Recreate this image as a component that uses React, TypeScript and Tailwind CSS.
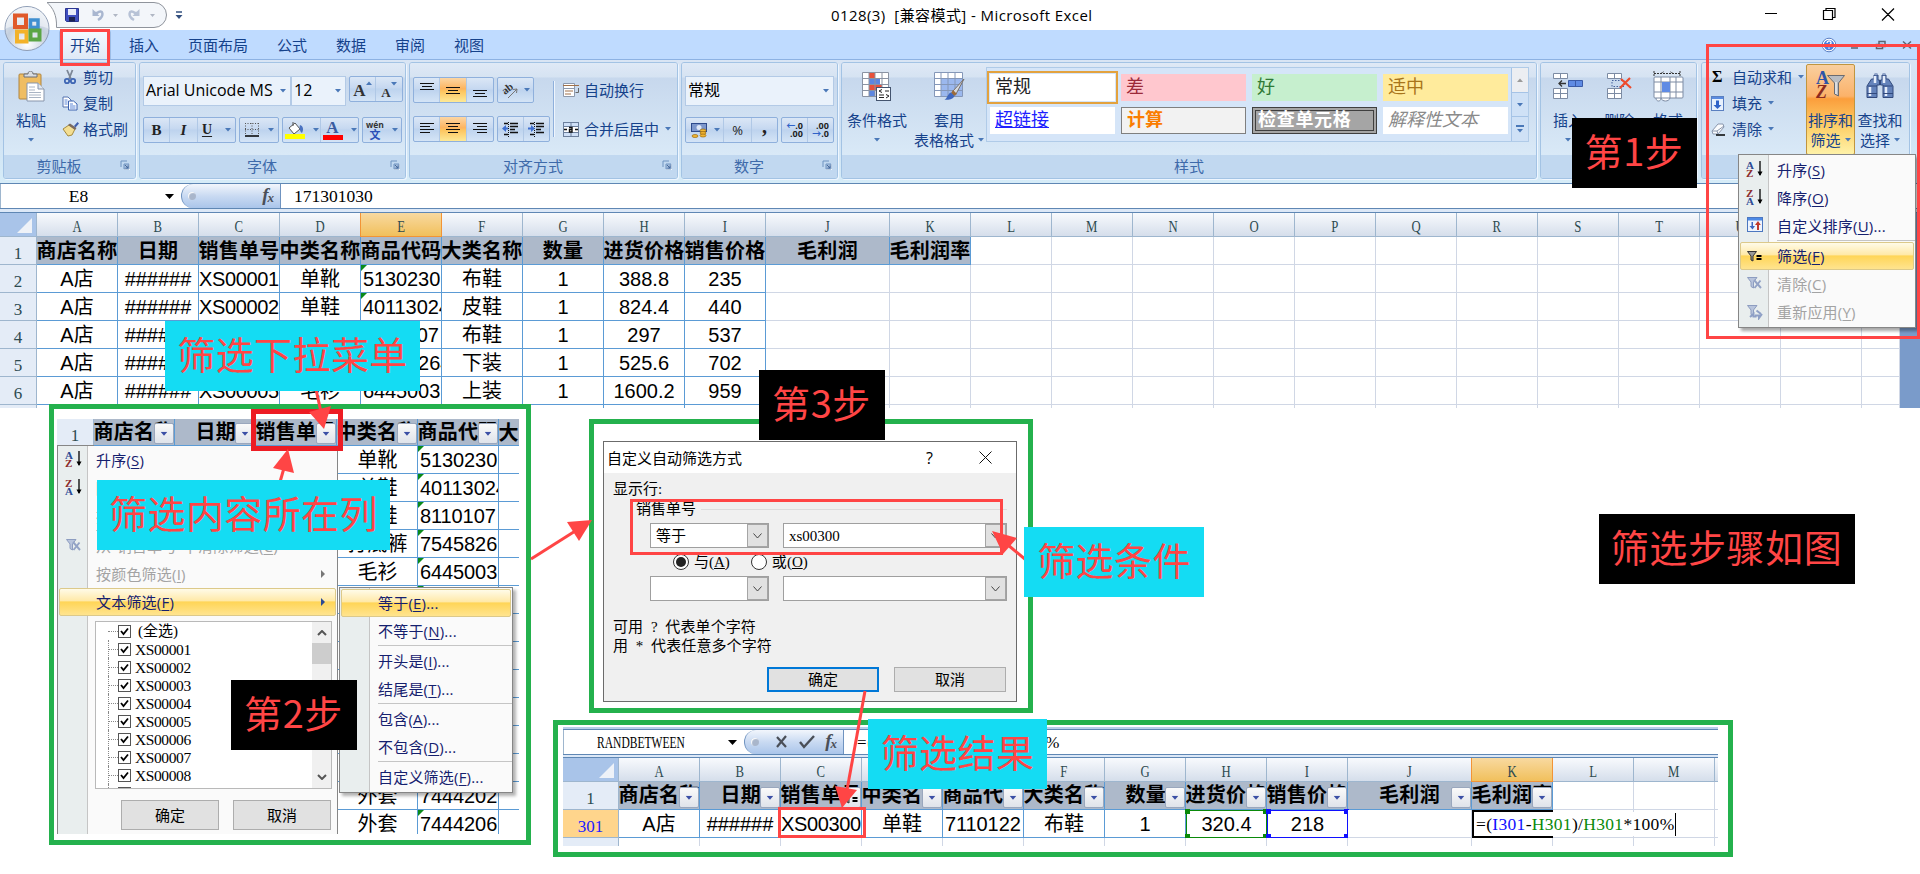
import React from "react";

const UI = "[font-family:'Open_Sans','Noto_Sans_CJK_SC',sans-serif]";
const SONG = "[font-family:'Liberation_Serif','Noto_Sans_CJK_SC',serif]";
const DATA = "[font-family:'Liberation_Sans','Noto_Sans_CJK_SC',sans-serif]";

/* ---------- small drawings ---------- */

function Caret({ c = "fill-[#4a78b8]" }: { c?: string }) {
  return (
    <svg width="6" height="4" viewBox="0 0 6 4" className={`shrink-0 ${c}`}>
      <path d="M0 0h6L3 3.6z" />
    </svg>
  );
}

function Launcher() {
  return (
    <svg width="10" height="10" viewBox="0 0 10 10" fill="none">
      <path d="M1 7V1h6" stroke="#6f93c0" />
      <path d="M4 9.5h5.5V4" stroke="#fff" />
      <path d="M4 4h5v5H4z" fill="#a9c0de" stroke="#6f93c0" />
      <path d="M5 5l3 3M8 5.5V8H5.5" stroke="#44699c" />
    </svg>
  );
}

function AlignIcon({ kind }: { kind: string }) {
  const rows: Record<string, number[][]> = {
    top: [[0, 0, 14], [2, 3, 10], [0, 6, 14]],
    mid: [[0, 4, 14], [2, 7, 10], [0, 10, 14]],
    bot: [[0, 7, 14], [2, 10, 10], [0, 13, 14]],
    left: [[0, 1, 14], [0, 4, 10], [0, 7, 14], [0, 10, 10]],
    center: [[0, 1, 14], [2, 4, 10], [0, 7, 14], [2, 10, 10]],
    right: [[0, 1, 14], [4, 4, 10], [0, 7, 14], [4, 10, 10]],
  };
  return (
    <svg width="14" height="15" viewBox="0 0 14 15" shapeRendering="crispEdges">
      {rows[kind].map(([x, y, w]) => (
        <rect key={y} x={x} y={y} width={w} height="1.4" fill="#111" />
      ))}
    </svg>
  );
}

function IndentIcon({ right }: { right?: boolean }) {
  return (
    <svg width="17" height="15" viewBox="0 0 17 15">
      <path d="M2 1.500h4M8 1.500h8M8 4.500h8M8 7.500h5M8 10.500h8M2 12.500h4" stroke="#111" strokeWidth="1.500" />
      <path d="M6.500 0v15" stroke="#111" strokeDasharray="1 1" />
      {right ? <path d="M0 5.500h3V3l4 3.500L3 10V7.500H0z" fill="#3f6fd0" /> : <path d="M6 5.500H4V3L0 6.500 4 10V7.500h2z" fill="#3f6fd0" />}
    </svg>
  );
}

function Funnel({ mark, dim }: { mark: "eq" | "x" | "re"; dim?: boolean }) {
  return (
    <svg width="16" height="16" viewBox="0 0 16 16" fill="none">
      <path d={mark === "eq" ? "M0.500 3.500h9L6 8v5l-2-1V8z" : "M0.500 1.500h9.500L6.500 6v6l-2.500-1.500V6z"} fill={dim ? "#b8c4dc" : "#9a9a9a"} stroke={dim ? "#8d9dc0" : "#333"} />
      {mark === "eq" && <path d="M9.500 8h5M9.500 11h5" stroke="#000" strokeWidth="1.800" />}
      {mark === "x" && <path d="M7 4l7 8M13.500 4.500L7.500 12" stroke="#93a3c6" strokeWidth="1.900" />}
      {mark === "re" && <path d="M3 13l3.500-3v2.500h3M15 10l-3 4v-2.500H8M9.500 6.500l4.500 3.500" stroke="#8fa0c6" strokeWidth="2" />}
    </svg>
  );
}

function SortIcon({ desc }: { desc?: boolean }) {
  return (
    <span className={`flex items-center gap-[3px] pb-[3px] ${SONG}`}>
      <span className="flex flex-col text-[11px] leading-[8px] font-bold">
        <span className={desc ? "text-[#8b2a2a]" : "text-[#2b4a94]"}>{desc ? "Z" : "A"}</span>
        <span className={desc ? "text-[#2b4a94]" : "text-[#8b2a2a]"}>{desc ? "A" : "Z"}</span>
      </span>
      <svg width="6" height="16" viewBox="0 0 6 16">
        <path d="M3 0v14" stroke="#000" strokeWidth="1.300" />
        <path d="M0.500 10.500L3 15l2.500-4.500z" />
      </svg>
    </span>
  );
}

function CustomSortIcon() {
  return (
    <svg width="16" height="15" viewBox="0 0 16 15" className="mb-[3px]">
      <rect x="0.500" y="0.500" width="15" height="14" fill="#eef4fd" stroke="#4c77c0" />
      <rect x="1" y="1" width="14" height="2.500" fill="#4c8ae6" />
      <path d="M4.500 5v4H2.500L5.500 12.500 8 9H6V5z" fill="#3c66c0" />
      <path d="M10 13V8H8L11 4 13.800 8H12v5z" fill="#c0392b" />
    </svg>
  );
}

function OfficeOrb() {
  return (
    <svg width="48" height="50" viewBox="0 0 48 50">
      <defs>
        <radialGradient id="orb" cx="50%" cy="85%" r="85%">
          <stop offset="0" stopColor="#fff" />
          <stop offset="0.550" stopColor="#c4cfde" />
          <stop offset="1" stopColor="#eef2f8" />
        </radialGradient>
      </defs>
      <circle cx="24" cy="24.500" r="22" fill="url(#orb)" stroke="#8e9db5" />
      <path d="M2.500 24.500a21.500 21.500 0 0143 0c-14-5-29-5-43 0z" fill="#f8fafc" opacity="0.550" />
      <g fill="none" strokeWidth="4">
        <rect x="12" y="11.500" width="11" height="11.500" stroke="#e0592a" />
        <rect x="27.500" y="16" width="7.500" height="7.500" stroke="#3f8fd0" strokeWidth="3.500" />
        <rect x="14" y="27.500" width="9.500" height="10" stroke="#f3b229" />
        <rect x="27.500" y="26.500" width="9" height="9" stroke="#5aa545" />
      </g>
    </svg>
  );
}

function PasteIcon() {
  return (
    <svg width="27" height="31" viewBox="0 0 27 31">
      <rect x="1" y="3" width="22" height="25" rx="1" fill="#efbd62" stroke="#b08540" />
      <path d="M6 6V3h4c0-4 5-4 5 0h4v3z" fill="#d9dde2" stroke="#6a6f78" />
      <path d="M9 12h11l6 6v12H9z" fill="#fff" stroke="#8795ab" />
      <path d="M20 12v6h6" fill="#dfe6f0" stroke="#8795ab" />
      <path d="M11 16h6M11 19h6M11 21.500h12M11 24h12M11 26.500h12" stroke="#a9b4c4" />
    </svg>
  );
}

function CutIcon() {
  return (
    <svg width="16" height="16" viewBox="0 0 16 16" fill="none">
      <path d="M5 1l4 9M10.500 1L7 10" stroke="#7d8796" strokeWidth="1.800" />
      <circle cx="5" cy="12" r="2.200" stroke="#3f66b4" strokeWidth="1.800" />
      <circle cx="11" cy="12" r="2.200" stroke="#3f66b4" strokeWidth="1.800" />
    </svg>
  );
}

function CopyIcon() {
  return (
    <svg width="16" height="16" viewBox="0 0 16 16">
      <path d="M1 2h5l3 3v7H1z" fill="#fff" stroke="#5473b0" />
      <path d="M6.500 6h5l3.500 3v6H6.500z" fill="#fff" stroke="#3c62b0" />
      <path d="M2.500 5h3M2.500 7h3M2.500 9h3M8 9h3M8 11h5.500M8 13h5.500" stroke="#5c86d6" />
    </svg>
  );
}

function BrushIcon() {
  return (
    <svg width="18" height="16" viewBox="0 0 18 16">
      <path d="M1 8l6-4 6 4-3 6-4 1z" fill="#f3de92" stroke="#a58a3c" />
      <path d="M6 4l7 5 1.500-2L8 2.500z" fill="#7a6a60" />
      <path d="M12 5l3.500-4 1.500 1.500-3.500 4z" fill="#3f5fae" />
    </svg>
  );
}

function CondIcon() {
  return (
    <svg width="30" height="30" viewBox="0 0 30 30">
      <path d="M0.500 1.500h26v24h-26z" fill="#fff" />
      <path d="M7 1.500h6v6H7zM7 13.500h13v6H7z" fill="#e8503a" />
      <path d="M7 7.500h11v6H7zM7 19.500h6v6H7z" fill="#5c86e0" />
      <path d="M0.500 1.500h26v24h-26zM0.500 7.500h26M0.500 13.500h26M0.500 19.500h26M7 1v24M13 1v24M20 1v24" fill="none" stroke="#8a93a3" />
      <rect x="14.500" y="16.500" width="14" height="13" fill="#fff" stroke="#44546e" />
      <path d="M20 18.500l-3 1.500 3 1.500M17 24h5M17 26.500h5M23 20h4M24 23.500l3 1.500-3 2" fill="none" stroke="#222" />
    </svg>
  );
}

function TableStyleIcon() {
  return (
    <svg width="31" height="30" viewBox="0 0 31 30">
      <path d="M0.500 1.500h28v24h-28z" fill="#fff" />
      <path d="M7 7.500h21.500v18H7z" fill="#9bb8ee" />
      <path d="M0.500 1.500h28v24h-28zM0.500 7.500h28M0.500 13.500h28M0.500 19.500h28M7 1v24M14 1v24M21 1v24" fill="none" stroke="#8497b8" />
      <path d="M30 8L19 20l3 3z" fill="#d8dbe0" stroke="#77706a" />
      <path d="M19 19l4 4-3 2-3-3z" fill="#9b6b3a" />
      <path d="M17 21.500l3.500 3.500c-1 3-6 4.500-10 3.500 3-1 3-6 6.500-7z" fill="#3f68bf" />
    </svg>
  );
}

function InsertCells() {
  return (
    <svg width="31" height="28" viewBox="0 0 31 28" fill="#fff" stroke="#7c8ba3">
      <path d="M0.500 2.500h14v5h-14zM7.500 2.500v5" />
      <path d="M0.500 17.500h14v10h-14zM7.500 17.500v10M0.500 22.500h14" />
      <path d="M15.500 9.500h14v6h-14zM22.500 9.500v6" fill="#5f8be4" stroke="#3a5ba8" />
      <path d="M13 12.500H6M9 9.500l-3 3 3 3" stroke="#333" fill="none" strokeWidth="1.300" />
    </svg>
  );
}

function DeleteCells() {
  return (
    <svg width="25" height="28" viewBox="0 0 25 28" fill="#fff" stroke="#7c8ba3">
      <path d="M0.500 2.500h14v5h-14zM7.500 2.500v5" />
      <path d="M0.500 17.500h14v10h-14zM7.500 17.500v10M0.500 22.500h14" />
      <path d="M5 9.500h12v6H5z" fill="none" stroke="#44609a" strokeDasharray="1.500 1.500" />
      <path d="M14 8l10 9M23 7l-10 10" stroke="#ee4a2c" strokeWidth="2.200" />
    </svg>
  );
}

function FormatCells() {
  return (
    <svg width="31" height="31" viewBox="0 0 31 31" fill="#fff" stroke="#7c8ba3">
      <path d="M1 2.500h26M1 0v5M27 0v5M8 2.500l3-2M20 2.500l-3-2" stroke="#333" strokeDasharray="2 1" fill="none" />
      <path d="M3 27c0 4 5 4 5 0 1 4 8 4 9 0" />
      <rect x="1" y="6" width="29" height="21" rx="1" />
      <path d="M1 11h29M1 21h29M8 6v21M17 6v21M23 6v21" />
      <rect x="9" y="11" width="8" height="10" fill="#5f8be4" stroke="none" />
    </svg>
  );
}

function SortFilterIcon() {
  return (
    <span className={`flex items-start ${SONG}`}>
      <span className="flex flex-col text-[18px] leading-[14px] font-bold">
        <span className="text-[#2d55a8]">A</span>
        <span className="text-[#8b2a20] italic">Z</span>
      </span>
      <svg width="18" height="24" viewBox="0 0 18 24" className="-ml-[2px] mt-[3px]">
        <path d="M0.500 1.500h17L11.500 9v13l-4-2V9z" fill="#b9bcc2" stroke="#6b6b70" />
        <path d="M9 8v12" stroke="#f0f0f2" strokeWidth="1.300" />
      </svg>
    </span>
  );
}

function Binoculars() {
  return (
    <svg width="28" height="28" viewBox="0 0 28 28">
      <g fill="#6483bb" stroke="#31497c">
        <path d="M8 4h4v5h1.500v5h-2.500v12.500H1V15l4.500-7H8z" />
        <path d="M20 4h-4v5h-1.500v5H17v12.500h10V15l-4.500-7H20z" />
      </g>
      <path d="M4 16v9M20 16v9M9 5v7M18 5v7" stroke="#e6eefb" strokeWidth="2.500" />
      <path d="M1 22.500h10M17 22.500h10M2 15h9M17 15h9" stroke="#31497c" />
      <path d="M8.500 3h3M16.500 3h3" stroke="#8fa3c8" strokeWidth="2" />
    </svg>
  );
}

/* ---------- ribbon ---------- */

function Group({ w, label, launch, children }: { w: string; label: string; launch?: boolean; children?: React.ReactNode }) {
  return (
    <section className={`${w} flex h-[117px] shrink-0 flex-col overflow-hidden rounded-[3px] border border-[#a3c3e4] shadow-[1px_1px_0_#eef6ff]`}>
      <div className="flex h-[92px] bg-[linear-gradient(#dfe9f6_0px,#d6e3f2_14px,#c7d8ed_15px,#d9e9f7_92px)]">{children}</div>
      <div className="flex flex-1 items-center bg-[#c1d8f0] text-[15px] leading-[20px] text-[#3e6aaa]">
        <span className={`flex-1 pb-[2px] text-center ${launch ? "pr-[6px]" : ""}`}>{label}</span>
        {launch && (
          <span className="mr-[5px] mb-[4px]">
            <Launcher />
          </span>
        )}
      </div>
    </section>
  );
}

function Big({ icon, lines, w, arrow = "below" }: { icon: React.ReactNode; lines: string[]; w: string; arrow?: "below" | "inline" }) {
  return (
    <div className={`${w} flex shrink-0 flex-col items-center pt-[8px] text-[15px] leading-[20px] text-[#15428b]`}>
      <div className="mb-[7px] flex h-[32px] items-start justify-center">{icon}</div>
      {lines.map((l, i) => (
        <div key={l} className="flex items-center whitespace-nowrap">
          {l}
          {arrow === "inline" && i === lines.length - 1 && (
            <span className="mb-[1px] ml-[4px] flex">
              <Caret />
            </span>
          )}
        </div>
      ))}
      {arrow === "below" && (
        <div className="flex h-[20px] items-center">
          <Caret />
        </div>
      )}
    </div>
  );
}

function Btns({ children }: { children: React.ReactNode }) {
  return <div className="flex h-[26px] shrink-0 divide-x divide-[#b0c8e6] rounded-[2px] border border-[#8fb0dc] bg-[linear-gradient(#dbe7f6,#c6d8f0_45%,#bdd3ee_50%,#d4e4f6)]">{children}</div>;
}

function B({ w, on, children }: { w: string; on?: boolean; children?: React.ReactNode }) {
  return <span className={`${w} flex items-center justify-center ${on ? "bg-[linear-gradient(#fcd6a4,#fdb45f_45%,#fdc55f_55%,#fde996)]" : ""}`}>{children}</span>;
}

function Row({ icon, text, arrow }: { icon: React.ReactNode; text: string; arrow?: boolean }) {
  return (
    <div className="flex h-[26px] items-center">
      <span className="flex w-[21px]">{icon}</span>
      {text}
      {arrow && (
        <span className="ml-[6px] flex">
          <Caret />
        </span>
      )}
    </div>
  );
}

function Field({ w, text }: { w: string; text: string }) {
  return (
    <div className={`${w} flex h-[30px] shrink-0 items-center border border-[#b3cae6] bg-[#eaf2fb] pr-[4px] pl-[2px] text-[16px] text-black`}>
      <span className="flex-1 pb-[3px] whitespace-nowrap">{text}</span>
      <Caret />
    </div>
  );
}

function Swatch({ cls, text }: { cls: string; text: string }) {
  return <div className={`h-[27px] w-[125px] pl-[5px] text-[18px] whitespace-nowrap ${cls}`}>{text}</div>;
}

function Ribbon() {
  return (
    <div className="flex h-[124px] items-start gap-[3px] border-t border-[#8db2e3] bg-[linear-gradient(#d9e5f4,#cfe0f3_50%,#d6ecf8)] pt-[2px] pl-[3px] text-[15px] leading-[20px] text-[#15428b]">
      <Group w="w-[133px]" label="剪贴板" launch>
        <Big w="w-[54px]" icon={<PasteIcon />} lines={["粘贴"]} />
        <div className="ml-[4px] flex flex-col pt-px">
          <Row icon={<CutIcon />} text="剪切" />
          <Row icon={<CopyIcon />} text="复制" />
          <Row icon={<BrushIcon />} text="格式刷" />
        </div>
      </Group>

      <Group w="w-[267px]" label="字体" launch>
        <div className="flex flex-col pt-[13px] pl-[3px]">
          <div className="flex items-start">
            <Field w="w-[148px]" text="Arial Unicode MS" />
            <Field w="w-[55px]" text="12" />
            <div className="ml-[3px]">
              <Btns>
                <B w="w-[26px]">
                  <span className={`${SONG} pt-[4px] text-[17px] font-bold text-[#333]`}>A</span>
                  <span className="mb-[12px] flex rotate-180"><Caret /></span>
                </B>
                <B w="w-[26px]">
                  <span className={`${SONG} pt-[7px] text-[13px] font-bold text-[#333]`}>A</span>
                  <span className="mb-[10px] flex"><Caret /></span>
                </B>
              </Btns>
            </div>
          </div>
          <div className="mt-[11px] flex gap-[3px]">
            <Btns>
              <B w="w-[26px]"><b className={`${SONG} text-[15px] text-[#222]`}>B</b></B>
              <B w="w-[28px]"><b className={`${SONG} text-[15px] text-[#222] italic`}>I</b></B>
              <B w="w-[37px]">
                <b className={`${SONG} mr-[13px] text-[14px] text-[#222] underline underline-offset-2`}>U</b>
                <Caret />
              </B>
            </Btns>
            <Btns>
              <B w="w-[38px]">
                <svg width="14" height="14" viewBox="0 0 14 14" className="mr-[9px]">
                  <path d="M0.500 0v12M7 0v12M13.500 0v12M0 0.500h14M0 6.500h14" stroke="#555" strokeDasharray="1 1.500" />
                  <path d="M0 13h14" stroke="#000" strokeWidth="1.500" />
                </svg>
                <Caret />
              </B>
            </Btns>
            <Btns>
              <B w="w-[38px]">
                <svg width="20" height="18" viewBox="0 0 20 18" className="mr-[8px]">
                  <path d="M4 7l6-5 5 6-6 5z" fill="#fff" stroke="#555" />
                  <path d="M8 5V1" stroke="#555" />
                  <path d="M15 4c3 1 4 4 2 8-2-1-3-5-2-8z" fill="#4a72c0" />
                  <rect x="0" y="13" width="20" height="5" fill="#ff0" />
                </svg>
                <Caret />
              </B>
              <B w="w-[37px]">
                <span className="mr-[8px] flex flex-col items-center">
                  <b className={`${SONG} text-[17px] leading-[14px] text-[#3a5ba0]`}>A</b>
                  <span className="h-[5px] w-[20px] bg-[#f00]" />
                </span>
                <Caret />
              </B>
            </Btns>
            <Btns>
              <B w="w-[38px]">
                <span className="mr-[8px] flex flex-col items-center">
                  <b className="text-[8.500px] leading-[8px] text-[#333]">wén</b>
                  <b className="text-[11px] leading-[11px] text-[#2b50b8]">文</b>
                </span>
                <Caret />
              </B>
            </Btns>
          </div>
        </div>
      </Group>

      <Group w="w-[269px]" label="对齐方式" launch>
        <div className="flex flex-col gap-[13px] pt-[14px] pl-[3px]">
          <div className="flex gap-[3px]">
            <Btns>
              <B w="w-[26px]"><AlignIcon kind="top" /></B>
              <B w="w-[27px]" on><AlignIcon kind="mid" /></B>
              <B w="w-[26px]"><AlignIcon kind="bot" /></B>
            </Btns>
            <Btns>
              <B w="w-[35px]">
                <svg width="17" height="17" viewBox="0 0 17 17" className="mr-[5px] overflow-visible">
                  <text x="2" y="12" fontSize="11" fontWeight="bold" fill="#333" transform="rotate(-38 4 11)" fontFamily="Liberation Serif">ab</text>
                  <path d="M6 16L15 7M15 7l-4 .5M15 7l-.5 4" stroke="#777" fill="none" />
                </svg>
                <Caret />
              </B>
            </Btns>
          </div>
          <div className="flex gap-[3px]">
            <Btns>
              <B w="w-[26px]"><AlignIcon kind="left" /></B>
              <B w="w-[27px]" on><AlignIcon kind="center" /></B>
              <B w="w-[26px]"><AlignIcon kind="right" /></B>
            </Btns>
            <Btns>
              <B w="w-[26px]"><IndentIcon /></B>
              <B w="w-[25px]"><IndentIcon right /></B>
            </Btns>
          </div>
        </div>
        <div className="mt-[18px] ml-[3px] h-[56px] w-[2px] border-l border-[#8fb0dc] bg-[#eef5fd]" />
        <div className="ml-[8px] flex flex-col gap-[13px] pt-[14px]">
          <Row
            text="自动换行"
            icon={
              <svg width="17" height="16" viewBox="0 0 17 16" fill="none">
                <path d="M0.500 1.500h11v13H0.500z" fill="#fff" stroke="#8d99ac" />
                <path d="M0 3.500h16" stroke="#a0714a" />
                <path d="M0 6.500h12" stroke="#8d99ac" />
                <path d="M2 9h8M2 12h6" stroke="#a0714a" />
                <path d="M15.500 6v4.500h-3" stroke="#666" />
              </svg>
            }
          />
          <Row
            text="合并后居中"
            arrow
            icon={
              <svg width="16" height="15" viewBox="0 0 16 15">
                <rect x="0.500" y="0.500" width="15" height="14" fill="#cfe0f7" stroke="#6b7f9c" />
                <path d="M0 4.500h16M0 10.500h16M8 0v4M8 11v4" stroke="#6b7f9c" />
                <rect x="1" y="5" width="14" height="5" fill="#fff" />
                <path d="M4 7.500H1M15 7.500h-3M6 5.500h3V10H6.500V7.500H9" stroke="#111" strokeWidth="1.400" fill="none" />
              </svg>
            }
          />
        </div>
      </Group>

      <Group w="w-[157px]" label="数字" launch>
        <div className="flex flex-col pt-[13px] pl-[3px]">
          <Field w="w-[149px]" text="常规" />
          <div className="mt-[11px] flex gap-[3px]">
            <Btns>
              <B w="w-[38px]">
                <svg width="18" height="17" viewBox="0 0 18 17" className="mr-[6px]">
                  <rect x="1.500" y="1.500" width="15" height="8" fill="#7d97cc" stroke="#2d4a8c" />
                  <circle cx="9" cy="5.500" r="2.500" fill="#dfe8f8" />
                  <g fill="#f2b632" stroke="#9a6a10" strokeWidth="0.700">
                    <ellipse cx="13" cy="8.500" rx="3" ry="1.500" />
                    <ellipse cx="13" cy="11" rx="3" ry="1.500" />
                    <ellipse cx="13" cy="13.500" rx="3" ry="1.500" />
                    <ellipse cx="5" cy="14" rx="3" ry="1.500" />
                  </g>
                </svg>
                <Caret />
              </B>
              <B w="w-[28px]"><span className="text-[13px] text-[#222]">%</span></B>
              <B w="w-[25px]"><b className={`${SONG} mb-[8px] text-[20px] text-[#222]`}>,</b></B>
            </Btns>
            <Btns>
              <B w="w-[26px]">
                <span className="flex flex-col items-end text-[9px] leading-[8px] font-bold text-[#222]">
                  <span><span className="text-[#2f62c8]">←</span>.0</span>
                  <span>.00</span>
                </span>
              </B>
              <B w="w-[25px]">
                <span className="flex flex-col items-end text-[9px] leading-[8px] font-bold text-[#222]">
                  <span>.00</span>
                  <span><span className="text-[#2f62c8]">→</span>.0</span>
                </span>
              </B>
            </Btns>
          </div>
        </div>
      </Group>

      <Group w="w-[696px]" label="样式">
        <Big w="w-[70px]" icon={<CondIcon />} lines={["条件格式"]} />
        <Big w="w-[74px]" icon={<TableStyleIcon />} lines={["套用", "表格格式"]} arrow="inline" />
        <div className="mt-[4px] flex h-[75px] w-[543px] border border-[#b0cbe8] bg-[#d5e5f8]">
          <div className={`grid grid-cols-[repeat(4,125px)] content-start gap-x-[6px] gap-y-[6px] pt-[6px] pl-[3px] ${SONG}`}>
            <Swatch cls="leading-[27px] bg-white text-[#222] outline-2 outline-offset-[1px] outline-[#e3a23e]" text="常规" />
            <Swatch cls="leading-[27px] bg-[#ffc7ce] text-[#9c2b3a]" text="差" />
            <Swatch cls="leading-[27px] bg-[#c6efce] text-[#2f7a35]" text="好" />
            <Swatch cls="leading-[27px] bg-[#ffeb9c] text-[#a8741a]" text="适中" />
            <Swatch cls="leading-[26px] bg-white text-[#2020ff] underline" text="超链接" />
            <Swatch cls="border border-[#7f7f7f] bg-[#f2f2f2] leading-[24px] font-bold text-[#fa7d00]" text="计算" />
            <Swatch cls="border-4 border-double border-[#3f3f3f] bg-[#a5a5a5] leading-[19px] font-bold text-white tracking-[0.700px] !pl-[2px]" text="检查单元格" />
            <Swatch cls="leading-[26px] bg-white text-[#8a8a8a] italic" text="解释性文本" />
          </div>
          <div className="ml-auto flex w-[17px] flex-col divide-y divide-[#a5c3e6] border-l border-[#a5c3e6] bg-[#cfe1f6]">
            <span className="flex flex-1 items-center justify-center bg-[#eceef2]"><span className="flex rotate-180"><Caret c="fill-[#9a9a9a]" /></span></span>
            <span className="flex flex-1 items-center justify-center"><Caret /></span>
            <span className="flex flex-1 flex-col items-center justify-center gap-[2px]"><span className="h-[2px] w-[8px] bg-[#4a78b8]" /><Caret /></span>
          </div>
        </div>
      </Group>

      <Group w="w-[157px]" label="单元格">
        <Big w="w-[54px]" icon={<InsertCells />} lines={["插入"]} />
        <Big w="w-[48px]" icon={<DeleteCells />} lines={["删除"]} />
        <Big w="w-[50px]" icon={<FormatCells />} lines={["格式"]} />
      </Group>

      <Group w="ml-px w-[209px]" label="编辑">
        <div className="flex w-[104px] flex-col pt-px pl-[9px]">
          <Row icon={<b className={`${SONG} ml-px text-[16px] text-black`}>Σ</b>} text="自动求和" arrow />
          <Row
            icon={
              <svg width="13" height="15" viewBox="0 0 13 15">
                <rect x="0.500" y="0.500" width="12" height="14" fill="#e8f1fd" stroke="#5a7fc0" />
                <rect x="1" y="1" width="11" height="2" fill="#5a8be0" />
                <path d="M5 4.500h3V9h2.500l-4 4-4-4H5z" fill="#2f62c8" />
              </svg>
            }
            text="填充"
            arrow
          />
          <Row
            icon={
              <svg width="15" height="13" viewBox="0 0 15 13">
                <path d="M1 8l6-7h5l1 3-6 7H2z" fill="#fafbfd" stroke="#8a97ad" />
                <path d="M1 8h5l7-5M6 8l1 3" fill="none" stroke="#8a97ad" />
                <path d="M5 12h9" stroke="#000" strokeWidth="1.500" />
              </svg>
            }
            text="清除"
            arrow
          />
        </div>
        <div className="mt-px h-[91px] rounded-[2px] border border-[#c0953f] bg-[linear-gradient(#f9cf9f,#fbb26a_35%,#fb9e3c_38%,#fdd06a_70%,#fff2a8)]">
          <div className="-mt-[2px]">
            <Big w="w-[47px]" icon={<SortFilterIcon />} lines={["排序和", "筛选"]} arrow="inline" />
          </div>
        </div>
        <Big w="w-[50px]" icon={<Binoculars />} lines={["查找和", "选择"]} arrow="inline" />
      </Group>
    </div>
  );
}

/* ---------- menus ---------- */

function Item({ text, k, tail = "", icon, on, dim, arrow }: { text: string; k: string; tail?: string; icon?: React.ReactNode; on?: boolean; dim?: boolean; arrow?: boolean }) {
  return (
    <div className={`flex h-[28px] shrink-0 items-center px-px text-[15px] tracking-[0.200px] ${dim ? "text-[#a3a3a3]" : "text-[#15206e]"}`}>
      <div className={`flex h-full flex-1 items-center rounded-[2px] border ${on ? "border-[#dcc98a] bg-[linear-gradient(#fffbe8,#ffe9a8_45%,#ffd557_50%,#ffe48f)]" : "border-transparent"}`}>
        <span className="flex w-[26px] shrink-0 justify-center pl-px">{icon}</span>
        <span className="flex-1 pl-[10px] whitespace-nowrap">
          {text}(<span className="underline underline-offset-2">{k}</span>){tail}
        </span>
        {arrow && (
          <svg width="4" height="8" viewBox="0 0 4 8" className={`mr-[10px] ${dim ? "fill-[#777]" : "fill-[#2b4a94]"}`}>
            <path d="M0 0l4 4-4 4z" />
          </svg>
        )}
      </div>
    </div>
  );
}

const Sep = () => <div className="ml-[38px] h-[2px] shrink-0 border-t border-[#c5c5c5]" />;
const gutter = "bg-[linear-gradient(90deg,#e9eeee_29px,#c5c5c5_29px,#c5c5c5_30px,#fafafa_30px)]";

function SortMenu() {
  return (
    <div className={`absolute top-[154px] left-[1738px] flex h-[174px] w-[178px] flex-col border border-[#868686] pt-px shadow-[3px_3px_3px_rgba(0,0,0,0.35)] ${gutter}`}>
      <Item icon={<SortIcon />} text="升序" k="S" />
      <Item icon={<SortIcon desc />} text="降序" k="O" />
      <Item icon={<CustomSortIcon />} text="自定义排序" k="U" tail="..." />
      <Sep />
      <Item icon={<Funnel mark="eq" />} text="筛选" k="F" on />
      <Item icon={<Funnel mark="x" dim />} text="清除" k="C" dim />
      <Item icon={<Funnel mark="re" dim />} text="重新应用" k="Y" dim />
    </div>
  );
}

/* ---------- sheets ---------- */

const HEAD = ["商店名称", "日期", "销售单号", "中类名称", "商品代码", "大类名称", "数量", "进货价格", "销售价格", "毛利润", "毛利润率"];
const ROWS = [
  ["A店", "######", "XS00001", "单靴", "5130230", "布鞋", "1", "388.8", "235"],
  ["A店", "######", "XS00002", "单鞋", "40113024", "皮鞋", "1", "824.4", "440"],
  ["A店", "######", "XS00003", "凉鞋", "8110107", "布鞋", "1", "297", "537"],
  ["A店", "######", "XS00004", "打底裤", "75458264", "下装", "1", "525.6", "702"],
  ["A店", "######", "XS00005", "毛衫", "6445003", "上装", "1", "1600.2", "959"],
];
const COLS = "ABCDEFGHIJKLMNOPQRSTUVW".split("");

const colW = (i: number) => (i === 9 ? "w-[124px]" : i === 22 ? "w-[38px]" : "w-[81px]");

function ColHead({ letter, w, on, h }: { letter: string; w: string; on?: boolean; h: string }) {
  return (
    <div
      className={`${w} ${h} ${SONG} flex shrink-0 items-center justify-center border-b pt-[4px] text-[17px] text-[#2d4a50] ${
        on ? "border-r border-[#f29436] bg-[linear-gradient(#f8d9a0,#f1c05c)] shadow-[-1px_0_0_#f29436]" : "border-r border-[#9eb6ce] bg-[linear-gradient(#f8fafd,#d5deeb)]"
      }`}
    >
      <span className="scale-x-[.75]">{letter}</span>
    </div>
  );
}

function Corner({ w, h }: { w: string; h: string }) {
  return (
    <div className={`${w} ${h} flex shrink-0 items-end justify-end border-r border-b border-[#9eb6ce] bg-[#a9c4e9] pr-[4px] pb-[3px]`}>
      <svg width="15" height="15" viewBox="0 0 15 15">
        <path d="M15 0v15H0z" fill="#eef2f8" />
      </svg>
    </div>
  );
}

function RowHead({ n, w, on }: { n: string; w: string; on?: boolean }) {
  return (
    <div className={`${w} ${SONG} flex h-full shrink-0 items-center justify-center border-r border-b border-[#9eb6ce] pt-[7px] text-[17px] ${on ? "bg-[#ffd58c] text-[#2020ff]" : "bg-[#e4ecf7] text-[#2d4a50]"}`}>
      {n}
    </div>
  );
}

function Cell({ w, text = "", kind = "data", pos = "mid", flag }: { w: string; text?: string; kind?: "data" | "head" | "empty"; pos?: "mid" | "order" | "code"; flag?: boolean }) {
  const tone = kind === "head" ? "border-[#5b9bd5] bg-[#adb9ca] font-bold" : kind === "data" ? "border-[#5b9bd5] bg-white" : "border-[#d0d7e5] bg-white";
  const place = pos === "mid" ? (kind === "head" ? "justify-center tracking-[0.300px]" : "justify-center") : pos === "order" ? "tracking-[-0.380px]" : "pl-[2px] tracking-[-0.100px]";
  return (
    <div className={`${w} ${DATA} relative flex h-full shrink-0 items-center overflow-hidden border-r border-b pt-px text-[20px] leading-[26px] whitespace-nowrap text-black ${tone} ${place}`}>
      {flag && <span className="absolute top-0 left-0 border-t-6 border-r-6 border-t-[#0a8a1a] border-r-transparent" />}
      {text}
    </div>
  );
}

const posOf = (i: number) => (i === 2 ? "order" : i === 4 ? "code" : "mid") as "order" | "code" | "mid";

function FilterCell({ text, w, active, end }: { text: string; w: string; active?: boolean; end?: boolean }) {
  return (
    <div className={`${w} ${DATA} relative flex h-full shrink-0 items-center overflow-hidden border-r border-b border-[#5b9bd5] bg-[#adb9ca] text-[20px] leading-[25px] font-bold tracking-[0.300px] whitespace-nowrap text-black ${end ? "justify-end pr-[19px]" : "justify-center"}`}>
      {text}
      <span className="absolute right-0 bottom-[1px] flex h-[21px] w-[20px] items-center justify-center rounded-[2px] border border-[#9aa7bd] bg-[linear-gradient(#fafafa,#dfe3ea)]">
        {active ? <Funnel mark="eq" /> : <span className="flex scale-[1.15]"><Caret c="fill-[#3b4fa5]" /></span>}
      </span>
    </div>
  );
}

function FormulaBar({ name, edit, children }: { name: string; edit?: boolean; children: React.ReactNode }) {
  return (
    <div className={`${SONG} flex h-[26px] shrink-0 border-y border-[#5f87b4] bg-white text-[17.500px] text-black`}>
      <div className="flex w-[181px] items-center border-l border-[#9eb6ce]">
        <span className={`flex-1 text-center ${edit ? "scale-x-[.72] pt-px pr-[14px] text-[16px]" : "pr-[9px]"}`}>{name}</span>
        <svg width="9" height="5" viewBox="0 0 9 5" className="mr-[7px]">
          <path d="M0 0h9L4.500 5z" />
        </svg>
      </div>
      <div className="flex w-[100px] items-center rounded-l-full border-r border-l border-[#6f93c0] bg-[linear-gradient(#f2f6fc,#c9daf2_50%,#aac5ea)] pr-[6px] pl-[6px]">
        <span className="h-[8px] w-[8px] rounded-full bg-[#a9b6cb] shadow-[inset_1px_1px_1px_#fff]" />
        {edit && (
          <svg width="40" height="14" viewBox="0 0 40 14" fill="none" stroke="#4a4f58" className="ml-[17px]">
            <path d="M1 2l9 10M10 1L1 12" strokeWidth="2.200" />
            <path d="M24 7l4 5 10-11" strokeWidth="2.400" />
          </svg>
        )}
        <span className="ml-auto flex items-center pb-[3px] leading-[20px] font-bold text-[#4a4f58] italic">
          <span className="text-[19px]">f</span>
          <span className="-ml-px mt-[6px] text-[13px]">x</span>
        </span>
      </div>
      <div className="flex flex-1 items-center pt-px pl-[13px]">{children}</div>
    </div>
  );
}

function MainSheet() {
  return (
    <div className="flex h-[196px] overflow-hidden border-t border-[#5f87b4]">
      <div className="flex w-[1900px] shrink-0 flex-col overflow-hidden">
        <div className="flex h-[24px] shrink-0">
          <Corner w="w-[37px]" h="h-[24px]" />
          {COLS.map((c, i) => (
            <ColHead key={c} letter={c} w={colW(i)} on={c === "E"} h="h-[24px]" />
          ))}
        </div>
        <div className="flex h-[28px] shrink-0">
          <RowHead n="1" w="w-[37px]" />
          {COLS.map((c, i) => (
            <Cell key={c} w={colW(i)} text={HEAD[i]} kind={i < 11 ? "head" : "empty"} />
          ))}
        </div>
        {ROWS.map((r, n) => (
          <div key={n} className="flex h-[28px] shrink-0">
            <RowHead n={String(n + 2)} w="w-[37px]" />
            {COLS.map((c, i) => (
              <Cell key={c} w={colW(i)} text={r[i]} kind={i < 9 ? "data" : "empty"} pos={posOf(i)} flag={i === 4} />
            ))}
          </div>
        ))}
        <div className="flex h-[28px] shrink-0">
          <RowHead n="" w="w-[37px]" />
          {COLS.map((c, i) => (
            <Cell key={c} w={colW(i)} kind={i < 9 ? "data" : "empty"} />
          ))}
        </div>
      </div>
      <div className="flex-1 bg-[#7a9bca]" />
    </div>
  );
}

/* ---------- step 2: drop-down ---------- */

const CODES: [string, string][] = [
  ["单靴", "5130230"],
  ["单鞋", "40113024"],
  ["凉鞋", "8110107"],
  ["打底裤", "7545826"],
  ["毛衫", "6445003"],
  ["", ""],
  ["", ""],
  ["", ""],
  ["", ""],
  ["", ""],
  ["", ""],
  ["", ""],
  ["外套", "7444202"],
  ["外套", "7444206"],
];

function Check() {
  return (
    <span className="flex h-[13px] w-[13px] shrink-0 items-center justify-center border border-[#555] bg-white">
      <svg width="9" height="9" viewBox="0 0 9 9" fill="none">
        <path d="M1 4l2.500 3L8 1.500" stroke="#000" strokeWidth="1.800" />
      </svg>
    </span>
  );
}

const btn = "flex h-[30px] w-[98px] items-center justify-center border border-[#adadad] bg-[#e1e1e1] text-[15px] text-black";

function StepTwo() {
  return (
    <div className="absolute top-[404px] left-[49px] h-[441px] w-[482px] border-5 border-[#24b14d] bg-white pt-[10px] pl-[3px]">
      <div className="relative h-[415px] w-[462px] overflow-hidden">
        <div className="flex h-[27px]">
          <RowHead n="1" w="w-[37px]" />
          <FilterCell text="商店名称" w="w-[81px]" />
          <FilterCell text="日期" w="w-[81px]" end />
          <FilterCell text="销售单号" w="w-[81px]" />
          <FilterCell text="中类名称" w="w-[81px]" />
          <FilterCell text="商品代码" w="w-[81px]" />
          <Cell w="w-[81px]" text="大类名称" kind="head" />
        </div>
        <div className="flex">
          <div className={`-mt-px flex h-[389px] w-[281px] shrink-0 flex-col border-t border-r border-l border-[#868686] ${gutter}`}>
            <Item icon={<SortIcon />} text="升序" k="S" />
            <Item icon={<SortIcon desc />} text="降序" k="O" />
            <Item text="按颜色排序" k="T" arrow dim />
            <Sep />
            <Item icon={<Funnel mark="x" dim />} text="从“销售单号”中清除筛选" k="C" dim />
            <Item text="按颜色筛选" k="I" arrow dim />
            <Item text="文本筛选" k="F" on arrow />
            <div className="mt-[5px] ml-[37px] flex h-[168px] w-[237px] shrink-0 overflow-hidden border border-[#b9b9b9] bg-white">
              <div className={`flex flex-1 flex-col text-[15.500px] text-black ${SONG}`}>
                <div className="flex h-[18px] shrink-0 items-center pl-[12px]">
                  <span className="h-px w-[10px] border-t border-dotted border-[#888]" />
                  <Check />
                  <span className="pl-[7px] text-[15px]">(全选)</span>
                </div>
                {[1, 2, 3, 4, 5, 6, 7, 8].map((n) => (
                  <div key={n} className="ml-[12px] flex h-[18px] shrink-0 items-center border-l border-dotted border-[#888]">
                    <span className="h-px w-[9px] border-t border-dotted border-[#888]" />
                    <Check />
                    <span className="pt-[2px] pl-[4px] tracking-[-0.400px]">XS0000{n}</span>
                  </div>
                ))}
                <div className="ml-[12px] flex h-[18px] shrink-0 items-center border-l border-dotted border-[#888] pl-[9px]">
                  <Check />
                </div>
              </div>
              <div className="flex w-[19px] flex-col items-center bg-[#f0f0f0]">
                <svg width="10" height="6" viewBox="0 0 10 6" fill="none" className="mt-[8px] mb-[7px]">
                  <path d="M1 5l4-4 4 4" stroke="#555" strokeWidth="2" />
                </svg>
                <span className="h-[21px] w-[19px] bg-[#cdcdcd]" />
                <svg width="10" height="6" viewBox="0 0 10 6" fill="none" className="mt-auto mb-[8px]">
                  <path d="M1 1l4 4 4-4" stroke="#555" strokeWidth="2" />
                </svg>
              </div>
            </div>
            <div className="mt-[11px] ml-[63px] flex gap-[14px]">
              <span className={btn}>确定</span>
              <span className={btn}>取消</span>
            </div>
          </div>
          <div className="flex flex-col">
            {CODES.map(([a, b], i) => (
              <div key={i} className="flex h-[28px] shrink-0">
                <Cell w="w-[80px]" text={a} />
                <Cell w="w-[81px]" text={b} pos="code" flag />
                <Cell w="w-[81px]" />
              </div>
            ))}
          </div>
        </div>
        <div className={`absolute top-[168px] left-[282px] flex h-[206px] w-[174px] flex-col border border-[#868686] pt-px shadow-[3px_3px_3px_rgba(0,0,0,0.3)] ${gutter}`}>
          <Item text="等于" k="E" tail="..." on />
          <Item text="不等于" k="N" tail="..." />
          <Sep />
          <Item text="开头是" k="I" tail="..." />
          <Item text="结尾是" k="T" tail="..." />
          <Sep />
          <Item text="包含" k="A" tail="..." />
          <Item text="不包含" k="D" tail="..." />
          <Sep />
          <Item text="自定义筛选" k="F" tail="..." />
        </div>
      </div>
    </div>
  );
}

/* ---------- step 3: dialog ---------- */

function Combo({ w, text = "" }: { w: string; text?: string }) {
  return (
    <div className={`${w} flex h-[25px] items-stretch border border-[#9f9f9f] bg-white`}>
      <span className="flex flex-1 items-center pl-[5px]">{text}</span>
      <span className="flex w-[21px] items-center justify-center border border-[#a5a5a5] bg-[#e1e1e1]">
        <svg width="9" height="6" viewBox="0 0 9 6" fill="none">
          <path d="M0.500 0.500l4 4.500 4-4.500" stroke="#444" />
        </svg>
      </span>
    </div>
  );
}

function Radio({ text, k, on }: { text: string; k: string; on?: boolean }) {
  return (
    <span className="flex items-center gap-[5px]">
      <span className="flex h-[16px] w-[16px] items-center justify-center rounded-full border border-[#333] bg-white">{on && <span className="h-[10px] w-[10px] rounded-full bg-[#222]" />}</span>
      <span>
        {text}(<span className="underline">{k}</span>)
      </span>
    </span>
  );
}

function StepThree() {
  return (
    <div className="absolute top-[419px] left-[589px] h-[294px] w-[444px] border-5 border-[#24b14d] bg-white pt-[17px] pl-[9px]">
      <div className={`flex h-[261px] w-[414px] flex-col border border-[#6b6b6b] bg-[#f0f0f0] text-[15px] leading-[20px] text-black ${SONG}`}>
        <div className={`flex h-[31px] shrink-0 items-center bg-white pl-[3px] ${UI}`}>
          <span className="flex-1">自定义自动筛选方式</span>
          <span className="mr-[46px] text-[16px]">?</span>
          <svg width="13" height="13" viewBox="0 0 13 13" className="mr-[24px]">
            <path d="M0.500 0.500l12 12M12.500 0.500l-12 12" stroke="#111" />
          </svg>
        </div>
        <div className="mt-[6px] pl-[9px]">显示行:</div>
        <div className="flex items-center pl-[32px]">
          销售单号
          <span className="ml-[5px] h-px w-[306px] bg-[#dcdcdc]" />
        </div>
        <div className="mt-[4px] flex gap-[14px] pl-[46px]">
          <Combo w="w-[119px]" text="等于" />
          <Combo w="w-[224px]" text="xs00300" />
        </div>
        <div className="mt-[4px] flex gap-[21px] pl-[69px]">
          <Radio text="与" k="A" on />
          <Radio text="或" k="O" />
        </div>
        <div className="mt-[4px] flex gap-[14px] pl-[46px]">
          <Combo w="w-[119px]" />
          <Combo w="w-[224px]" />
        </div>
        <div className="mt-[17px] pl-[9px] leading-[19px] tracking-[0.100px] whitespace-pre">可用  ?  代表单个字符</div>
        <div className="pl-[9px] leading-[19px] tracking-[0.100px] whitespace-pre">用  *  代表任意多个字符</div>
        <div className="mt-[11px] flex gap-[15px] pl-[163px]">
          <span className="flex h-[25px] w-[112px] items-center justify-center border-2 border-[#0078d7] bg-[#e1e1e1]">确定</span>
          <span className="flex h-[25px] w-[112px] items-center justify-center border border-[#adadad] bg-[#e1e1e1]">取消</span>
        </div>
      </div>
    </div>
  );
}

/* ---------- result ---------- */

const RESULT = ["A店", "######", "XS00300", "单鞋", "7110122", "布鞋", "1", "320.4", "218"];

function Picked({ w, text, tone, dot }: { w: string; text: string; tone: string; dot: string }) {
  return (
    <div className={`${w} ${DATA} relative flex h-full shrink-0 items-center justify-center border text-[20px] leading-[26px] ${tone}`}>
      {text}
      <i className={`absolute -top-[2px] -left-[2px] h-[5px] w-[5px] ${dot}`} />
      <i className={`absolute -top-[2px] -right-[2px] h-[5px] w-[5px] ${dot}`} />
      <i className={`absolute -bottom-[2px] -left-[2px] h-[5px] w-[5px] ${dot}`} />
      <i className={`absolute -right-[2px] -bottom-[2px] h-[5px] w-[5px] ${dot}`} />
    </div>
  );
}

function Result() {
  const cols = COLS.slice(0, 14);
  return (
    <div className="absolute top-[720px] left-[553px] h-[137px] w-[1180px] border-5 border-[#24b14d] bg-white pl-[5px]">
      <div className="h-[121px] w-[1155px] overflow-hidden pt-[2px]">
        <div className="h-[2px] bg-[#b8cfe9]" />
        <FormulaBar name="RANDBETWEEN" edit>
          <span className="text-[17px] tracking-[0.770px]">=(I301-H301)/H301*100%</span>
        </FormulaBar>
        <div className="h-[2px] bg-[#dce8f7]" />
        <div className="flex h-[25px] border-t border-[#5f87b4]">
          <Corner w="w-[56px]" h="h-[24px]" />
          {cols.map((c, i) => (
            <ColHead key={c} letter={c === "N" ? "" : c} w={colW(i)} on={c === "K"} h="h-[24px]" />
          ))}
        </div>
        <div className="flex h-[28px]">
          <RowHead n="1" w="w-[56px]" />
          {cols.map((c, i) => (i < 11 ? <FilterCell key={c} w={colW(i)} text={HEAD[i]} active={i === 2} end={i === 1 || i === 6} /> : <Cell key={c} w={colW(i)} kind="empty" />))}
        </div>
        <div className="flex h-[28px]">
          <RowHead n="301" w="w-[56px]" on />
          {cols.map((c, i) => {
            if (i === 7) return <Picked key={c} w={colW(i)} text={RESULT[i]} tone="border-[#0a8a0a]" dot="bg-[#0a8a0a]" />;
            if (i === 8) return <Picked key={c} w={colW(i)} text={RESULT[i]} tone="border-[#1010ff]" dot="bg-[#1010ff]" />;
            if (i === 10)
              return (
                <div key={c} className="relative h-full w-[81px] shrink-0 border-2 border-r-0 border-black">
                  <div className={`absolute top-0 left-0 z-10 flex h-[24px] w-[202px] items-center bg-white pt-px pl-[2px] text-[17.500px] tracking-[0.310px] whitespace-nowrap ${SONG}`}>
                    =(<span className="text-[#1010ff]">I301</span>-<span className="text-[#0a8a0a]">H301</span>)/<span className="text-[#0a8a0a]">H301</span>*100%
                    <span className="h-[23px] w-px bg-black" />
                  </div>
                </div>
              );
            return <Cell key={c} w={colW(i)} text={RESULT[i]} kind={i < 9 ? "data" : "empty"} pos={posOf(i)} />;
          })}
        </div>
        <div className="flex h-[28px]">
          <RowHead n="" w="w-[56px]" />
          {cols.map((c, i) => (
            <Cell key={c} w={colW(i)} kind="empty" />
          ))}
        </div>
      </div>
    </div>
  );
}

/* ---------- annotations ---------- */

function Label({ place, text, dark }: { place: string; text: string; dark?: boolean }) {
  return (
    <div
      className={`absolute flex h-[70px] items-center justify-center pb-[6px] text-[38px] leading-[44px] whitespace-nowrap text-[#ff4545] [font-family:'Noto_Sans_CJK_SC',sans-serif] ${
        dark ? "bg-black pr-px tracking-[0.600px]" : "bg-[#14dcf3] tracking-[0.400px]"
      } ${place}`}
    >
      {text}
    </div>
  );
}

const ARROWS: { line: number[]; head: string }[] = [
  { line: [315, 385, 321, 412], head: "324,429 309,412 331,406" },
  { line: [280, 482, 284, 468], head: "288,449 273,468 294,473" },
  { line: [531, 559, 580, 528], head: "592,520 567,522 579,541" },
  { line: [1026, 560, 1008, 545], head: "992,531 1017,538 1003,554" },
  { line: [865, 691, 847, 790], head: "842,808 835,786 857,790" },
];

export default function App() {
  return (
    <div className={`relative flex h-[874px] w-[1920px] flex-col overflow-hidden bg-white ${UI}`}>
      <header className="flex h-[30px] shrink-0 items-start">
        <div className="w-[47px]" />
        <svg width="150" height="30" viewBox="47 0 150 30" fill="none">
          <path d="M47 2.500h107a12.500 12.500 0 010 25H56.500C57 15 53 8 47 2.500z" fill="#f3f6fa" stroke="#8f949c" />
          <path d="M65.500 8.500h13v13h-12l-1-1z" fill="#3f4fc0" stroke="#2b3590" />
          <rect x="68" y="9" width="8" height="6" fill="#e8ecfa" />
          <rect x="69" y="17" width="6" height="4.500" fill="#1c2250" />
          <path d="M94 13h3c6-5 8 3 1 7" stroke="#a9b7d0" strokeWidth="2.500" />
          <path d="M92.500 9v7h7z" fill="#a9b7d0" />
          <path d="M138 13h-3c-6-5-8 3-1 7" stroke="#b7c2d6" strokeWidth="2.500" />
          <path d="M139.500 9v7h-7z" fill="#b7c2d6" />
          <path d="M113 14h5l-2.500 3zM150 14h5l-2.500 3z" fill="#b0b7c4" />
          <path d="M176 12h6" stroke="#33507f" strokeWidth="1.500" />
          <path d="M175.500 15h7l-3.500 4z" fill="#33507f" />
        </svg>
        <div className="flex-1 pt-[5px] pl-[634px] text-[15px] leading-[20px] tracking-[0.420px] whitespace-pre text-black">0128(3)  [兼容模式] - Microsoft Excel</div>
        <svg width="160" height="30" viewBox="1760 0 160 30" fill="none" stroke="#000" strokeWidth="1.200">
          <path d="M1765 13.500h12M1823.500 10.500h9v9h-9zM1826 10V8.500h9v9h-2M1882 8.500l12 12M1894 8.500l-12 12" />
        </svg>
      </header>

      <nav className="flex h-[29px] shrink-0 items-center bg-[#bfdbff] pl-[59px] text-[15px] leading-[20px] text-[#15428b]">
        <span className="mr-[18px] flex h-[29px] w-[52px] items-center justify-center rounded-t-[3px] border-x border-t border-[#9dbde6] bg-[linear-gradient(#f4f9ff,#dfe9f6)] pb-px">开始</span>
        <div className="flex flex-1 gap-[29px]">
          <span>插入</span>
          <span>页面布局</span>
          <span>公式</span>
          <span>数据</span>
          <span>审阅</span>
          <span>视图</span>
        </div>
        <svg width="100" height="20" viewBox="1820 34 100 20" fill="none">
          <circle cx="1829" cy="44" r="6" fill="#4a7ee0" stroke="#fff" strokeWidth="1.500" />
          <circle cx="1829" cy="44" r="6.800" stroke="#5a7fc4" />
          <path d="M1827 42c0-3 4.500-2.500 4 0 0 1.500-2 1-2 3M1829 46.500v1.200" stroke="#fff" strokeWidth="1.300" />
          <path d="M1851 47h7M1876.500 43.500h6v4h-6zM1879 43v-2.500h6v5h-2M1903 40.500l8 7M1911 40.500l-8 7" stroke="#5c6470" strokeWidth="1.500" />
        </svg>
      </nav>

      <Ribbon />

      <FormulaBar name="E8">171301030</FormulaBar>
      <div className="h-[3px] shrink-0 bg-[#dce8f7]" />
      <MainSheet />

      <div className="absolute top-[4px] left-[3px]">
        <OfficeOrb />
      </div>

      <SortMenu />
      <StepTwo />
      <StepThree />
      <Result />

      <div className="absolute top-[29px] left-[60px] h-[37px] w-[50px] border-3 border-[#ff4545]" />
      <div className="absolute top-[44px] left-[1706px] h-[295px] w-[214px] border-3 border-[#ff4545]" />
      <div className="absolute top-[409px] left-[251px] h-[42px] w-[92px] border-5 border-[#ed1c24]" />
      <div className="absolute top-[499px] left-[630px] h-[56px] w-[373px] border-3 border-[#ff4545]" />
      <div className="absolute top-[807px] left-[778px] h-[31px] w-[88px] border-3 border-[#ff4545]" />

      <svg className="absolute top-0 left-0" width="1920" height="874" viewBox="0 0 1920 874">
        {ARROWS.map((a) => (
          <g key={a.head} stroke="#ff4545" fill="#ff4545">
            <line x1={a.line[0]} y1={a.line[1]} x2={a.line[2]} y2={a.line[3]} strokeWidth="3" />
            <polygon points={a.head} stroke="none" />
          </g>
        ))}
      </svg>

      <Label place="top-[118px] left-[1572px] w-[125px]" text="第1步" dark />
      <Label place="top-[680px] left-[231px] w-[126px]" text="第2步" dark />
      <Label place="top-[370px] left-[759px] w-[126px]" text="第3步" dark />
      <Label place="top-[514px] left-[1599px] w-[256px]" text="筛选步骤如图" dark />
      <Label place="top-[321px] left-[165px] w-[255px]" text="筛选下拉菜单" />
      <Label place="top-[480px] left-[97px] w-[293px]" text="筛选内容所在列" />
      <Label place="top-[527px] left-[1024px] w-[180px]" text="筛选条件" />
      <Label place="top-[719px] left-[868px] w-[179px]" text="筛选结果" />
    </div>
  );
}
